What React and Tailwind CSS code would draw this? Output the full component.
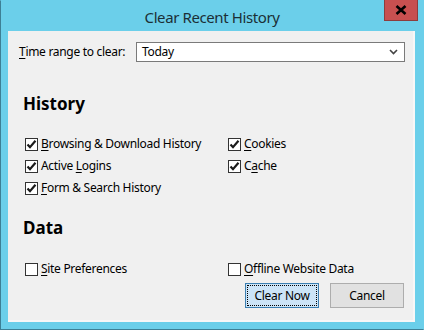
import React from "react";

const font = { fontFamily: '"Noto Sans", "Open Sans", sans-serif' };

function Box({ checked }) {
  return (
    <span className="w-[13px] h-[13px] border border-[#333333] bg-white flex items-center justify-center shrink-0">
      {checked && (
        <svg width="11" height="11" viewBox="0 0 11 11">
          <path d="M1.5 5.5 L4 8.2 L9.5 1.8" fill="none" stroke="#1a1a1a" strokeWidth="2.2" />
        </svg>
      )}
    </span>
  );
}

function Check({ checked, pre = "", u, post }) {
  return (
    <div className="flex items-center h-[22px] gap-[3px]">
      <Box checked={checked} />
      <span className="text-[12px] tracking-[-0.3px] text-black leading-none whitespace-nowrap">
        {pre}
        <span className="underline underline-offset-2">{u}</span>
        {post}
      </span>
    </div>
  );
}

export default function App() {
  return (
    <div
      className="w-[424px] h-[330px] bg-[#6bcfea] border border-[#3d7f95] border-t-[#6bcfea] border-r-[#6bcfea] flex flex-col"
      style={font}
    >
      <div className="relative h-[30px] flex items-center justify-center shrink-0">
        <span className="text-[15px] tracking-[-0.4px] text-[#1b2f36] mt-[2px]">Clear Recent History</span>
        <div className="absolute right-[5px] top-[-1px] w-[34px] h-[21px] bg-[#c75050] border border-[#8d3d3d] border-t-0 flex items-center justify-center">
          <svg width="12" height="10" viewBox="0 0 12 10">
            <path d="M1.5 1 L10.5 9 M10.5 1 L1.5 9" stroke="#000" strokeWidth="2.6" />
          </svg>
        </div>
      </div>
      <div className="ml-[7px] mr-[8px] h-[291px] bg-[#f0f0f0] border-r-2 border-b-2 border-[#f7f7f7] flex flex-col">
        <div className="flex items-center pl-[11px] pt-[11px]">
          <span className="text-[12px] tracking-[-0.3px] text-black w-[117px] whitespace-nowrap">
            <span className="underline underline-offset-2">T</span>ime range to clear:
          </span>
          <div className="w-[269px] h-[20px] bg-white border border-[#7a7a7a] flex items-center justify-between pl-[5px] pr-[6px]">
            <span className="text-[12px] tracking-[-0.3px] text-black">Today</span>
            <svg width="9" height="6" viewBox="0 0 9 6">
              <path d="M1 1 L4.5 4.5 L8 1" fill="none" stroke="#444" strokeWidth="1.6" />
            </svg>
          </div>
        </div>
        <div className="pl-[15px] mt-[33px] text-[17px] font-bold text-black leading-none">History</div>
        <div className="grid grid-cols-[203px_1fr] pl-[17px] mt-[21px]">
          <div className="flex flex-col">
            <Check checked u="B" post="rowsing & Download History" />
            <Check checked pre="Active " u="L" post="ogins" />
            <Check checked u="F" post="orm & Search History" />
          </div>
          <div className="flex flex-col">
            <Check checked u="C" post="ookies" />
            <Check checked pre="C" u="a" post="che" />
          </div>
        </div>
        <div className="pl-[15px] mt-[20px] text-[17px] font-bold text-black leading-none">Data</div>
        <div className="grid grid-cols-[203px_1fr] pl-[17px] mt-[22px]">
          <Check u="S" post="ite Preferences" />
          <Check u="O" post="ffline Website Data" />
        </div>
        <div className="flex justify-end gap-[11px] pr-[9px] mt-[3px]">
          <div className="w-[74px] h-[25px] bg-[#cce4f7] border border-[#3c7fb1] p-[1px]">
            <div className="w-full h-full border border-dotted border-black flex items-center justify-center text-[12px] tracking-[-0.3px] text-black">
              Clear Now
            </div>
          </div>
          <div className="w-[74px] h-[25px] bg-[#e1e1e1] border border-[#adadad] flex items-center justify-center text-[12px] tracking-[-0.3px] text-black">
            Cancel
          </div>
        </div>
      </div>
    </div>
  );
}
